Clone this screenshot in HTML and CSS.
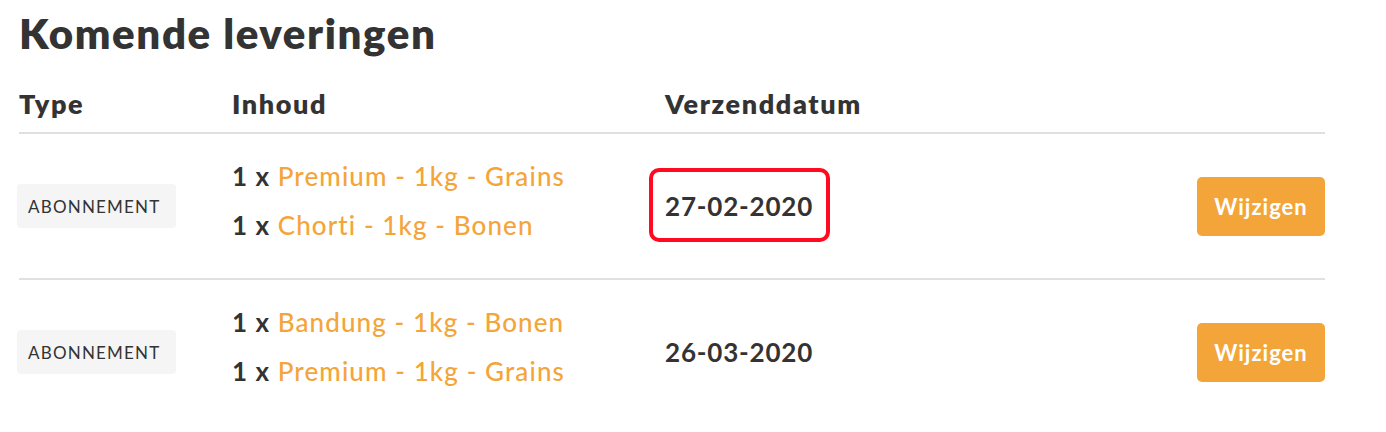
FILE: index.html
```html
<!DOCTYPE html>
<html lang="nl">
<head>
    <meta charset="UTF-8">
    <meta name="viewport" content="width=device-width, initial-scale=1.0">
    <title>Komende leveringen</title>
    <link rel="stylesheet" href="styles.css">
</head>
<body>
    <div class="deliveries">
        <h1 class="title">Komende leveringen</h1>

        <table class="delivery-table">
            <thead>
                <tr>
                    <th class="col-type">Type</th>
                    <th class="col-content">Inhoud</th>
                    <th class="col-date">Verzenddatum</th>
                    <th class="col-action"></th>
                </tr>
            </thead>
            <tbody>
                <tr>
                    <td><span class="badge">Abonnement</span></td>
                    <td class="content">
                        <div class="item">1 x <a href="#">Premium - 1kg - Grains</a></div>
                        <div class="item">1 x <a href="#">Chorti - 1kg - Bonen</a></div>
                    </td>
                    <td><span class="date highlight">27-02-2020</span></td>
                    <td class="col-action"><button class="btn" type="button">Wijzigen</button></td>
                </tr>
                <tr>
                    <td><span class="badge">Abonnement</span></td>
                    <td class="content">
                        <div class="item">1 x <a href="#">Bandung - 1kg - Bonen</a></div>
                        <div class="item">1 x <a href="#">Premium - 1kg - Grains</a></div>
                    </td>
                    <td><span class="date">26-03-2020</span></td>
                    <td class="col-action"><button class="btn" type="button">Wijzigen</button></td>
                </tr>
            </tbody>
        </table>
    </div>
</body>
</html>
```

FILE: styles.css
```css
body {
    margin: 0;
    padding: 0;
    font-family: Lato, "Open Sans", sans-serif;
    color: #333;
    background: #fff;
}

.deliveries {
    width: 1306px;
    padding: 9px 0 0 19px;
}

.title {
    margin: 0 0 30px;
    font-size: 42px;
    font-weight: 800;
    line-height: 48px;
    letter-spacing: 1.6px;
}

.delivery-table {
    width: 100%;
    border-collapse: collapse;
}

.delivery-table th {
    text-align: left;
    font-size: 27px;
    font-weight: 800;
    letter-spacing: 1.6px;
    padding: 0 0 12px;
    border-bottom: 2px solid #e0e0e0;
}

.delivery-table td {
    padding: 23px 0 23px;
    vertical-align: middle;
    border-bottom: 2px solid #e0e0e0;
}

.delivery-table td.content {
    padding: 18px 0 28px;
}

.delivery-table tbody tr:last-child td {
    border-bottom: 0;
}

.col-type {
    width: 213px;
}

.col-content {
    width: 433px;
}

.col-action {
    text-align: right;
}

.badge {
    display: inline-block;
    margin-left: -2px;
    padding: 0 15px 0 11px;
    height: 44px;
    line-height: 46px;
    background: #f5f5f5;
    border-radius: 4px;
    font-size: 17px;
    letter-spacing: 1.2px;
    text-transform: uppercase;
    color: #333;
}

.item {
    font-size: 26px;
    font-weight: 700;
    line-height: 49px;
    letter-spacing: 1.1px;
}

.item a {
    color: #f4a53a;
    font-weight: 500;
    text-decoration: none;
}

.date {
    position: relative;
    font-size: 26px;
    font-weight: 700;
    letter-spacing: 0.8px;
}

.highlight::after {
    content: "";
    position: absolute;
    left: -16px;
    right: -17px;
    top: -22px;
    bottom: -20px;
    border: 4px solid #ff0a1e;
    border-radius: 10px;
}

.btn {
    background: #f4a53a;
    color: #fff;
    border: 0;
    border-radius: 5px;
    width: 128px;
    height: 59px;
    font-family: inherit;
    font-size: 22px;
    font-weight: 700;
    letter-spacing: 1px;
    cursor: pointer;
}
```
